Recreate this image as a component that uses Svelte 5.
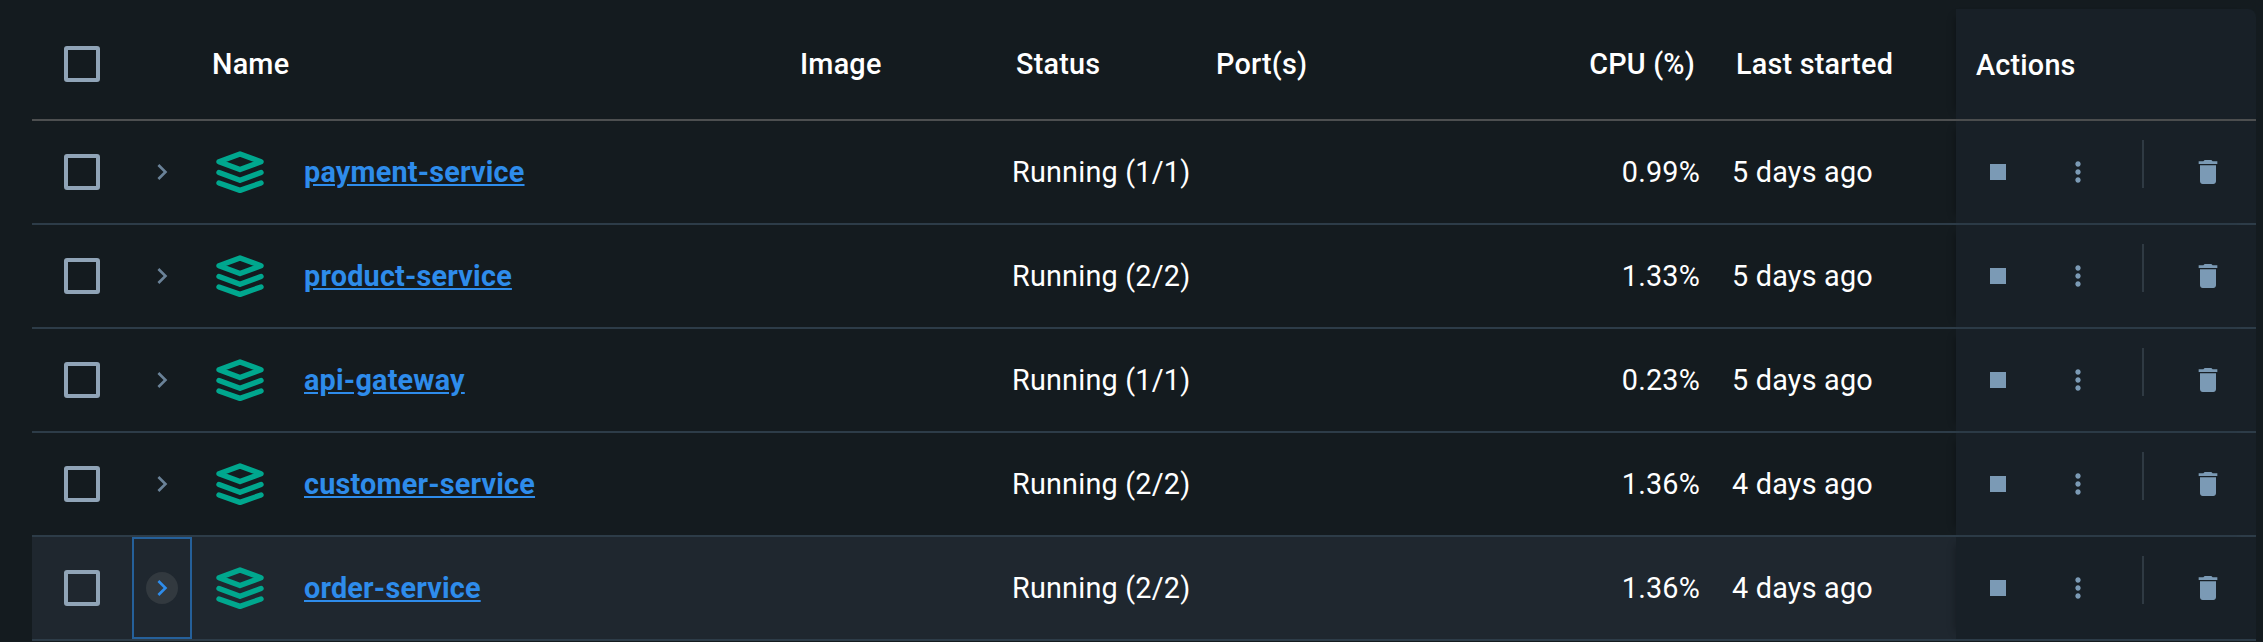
<script>
  const services = [
    { name: "payment-service", status: "Running (1/1)", cpu: "0.99%", started: "5 days ago" },
    { name: "product-service", status: "Running (2/2)", cpu: "1.33%", started: "5 days ago" },
    { name: "api-gateway", status: "Running (1/1)", cpu: "0.23%", started: "5 days ago" },
    { name: "customer-service", status: "Running (2/2)", cpu: "1.36%", started: "4 days ago" },
    { name: "order-service", status: "Running (2/2)", cpu: "1.36%", started: "4 days ago", active: true },
  ];
</script>

<div class="table">
  <div class="row head">
    <div class="select"><span class="checkbox"></span></div>
    <div class="expand"></div>
    <div class="name">Name</div>
    <div class="image">Image</div>
    <div class="status">Status</div>
    <div class="ports">Port(s)</div>
    <div class="cpu">CPU (%)</div>
    <div class="started">Last started</div>
    <div class="actions"><span class="actions-title">Actions</span></div>
  </div>

  {#each services as service}
    <div class="row" class:active={service.active}>
      <div class="select"><span class="checkbox"></span></div>
      <div class="expand">
        <span class="chevron">
          <svg viewBox="0 0 24 24" width="32" height="32"><path d="M10 6 8.59 7.41 13.17 12l-4.58 4.59L10 18l6-6z" /></svg>
        </span>
      </div>
      <div class="name">
        <svg class="stack" viewBox="0 0 48 42" width="48" height="42">
          <path d="M24 3 45 10.75 24 18.5 3 10.75Z" fill="none" stroke-width="5.4" stroke-linejoin="round" />
          <path d="M3 21.5 24 29.3 45 21.5" fill="none" stroke-width="5.4" stroke-linecap="round" stroke-linejoin="round" />
          <path d="M3 32 24 39.4 45 32" fill="none" stroke-width="5.4" stroke-linecap="round" stroke-linejoin="round" />
        </svg>
        <a href="#top">{service.name}</a>
      </div>
      <div class="image"></div>
      <div class="status">{service.status}</div>
      <div class="ports"></div>
      <div class="cpu">{service.cpu}</div>
      <div class="started">{service.started}</div>
      <div class="actions">
        <svg viewBox="0 0 24 24" width="32" height="32"><path d="M6 6h12v12H6z" /></svg>
        <svg viewBox="0 0 24 24" width="32" height="32"><path d="M12 8c1.1 0 2-.9 2-2s-.9-2-2-2-2 .9-2 2 .9 2 2 2zm0 2c-1.1 0-2 .9-2 2s.9 2 2 2 2-.9 2-2-.9-2-2-2zm0 6c-1.1 0-2 .9-2 2s.9 2 2 2 2-.9 2-2-.9-2-2-2z" /></svg>
        <span class="divider"></span>
        <svg viewBox="0 0 24 24" width="32" height="32"><path d="M6 19c0 1.1.9 2 2 2h8c1.1 0 2-.9 2-2V7H6v12zM19 4h-3.5l-1-1h-5l-1 1H5v2h14V4z" /></svg>
      </div>
    </div>
  {/each}
</div>

<style>
  :global(body) {
    background: #141b1f;
  }

  .table {
    margin: 9px 7px 0 32px;
    font-family: Roboto, sans-serif;
    font-size: 28.8px;
    letter-spacing: 0.2px;
    color: #fff;
  }

  .row {
    display: grid;
    grid-template-columns: 100px 60px 592px 212px 204px 316px 184px 256px 300px;
    height: 104px;
    box-sizing: border-box;
    border-bottom: 2px solid #2d3c48;
  }

  .row > div {
    display: flex;
    align-items: center;
    white-space: nowrap;
  }

  .row.head {
    height: 112px;
    border-bottom-color: #4d4f50;
    font-weight: 500;
  }

  .row.active {
    background: #1f272f;
  }

  .select {
    padding-left: 32px;
  }

  .checkbox {
    width: 36px;
    height: 36px;
    box-sizing: border-box;
    border: 4px solid #90a4b7;
    border-radius: 3px;
  }

  .expand {
    justify-content: center;
  }

  .active .expand {
    outline: 2px solid #25609a;
    outline-offset: -2px;
  }

  .chevron {
    width: 32px;
    height: 32px;
    border-radius: 50%;
    fill: #6a8298;
  }

  .active .chevron {
    background: #32393f;
    fill: #2e8ceb;
  }

  .chevron svg {
    display: block;
  }

  .name {
    padding-left: 24px;
    gap: 40px;
  }

  .head .name {
    padding-left: 20px;
  }

  .stack {
    stroke: #00a78e;
    flex: none;
  }

  .name a {
    color: #2e8ceb;
    font-weight: 700;
  }

  .image {
    padding-left: 16px;
  }

  .status {
    padding-left: 16px;
  }

  .head .status {
    padding-left: 20px;
  }

  .ports {
    padding-left: 16px;
  }

  .cpu {
    justify-content: flex-end;
  }

  .head .cpu {
    padding-right: 5px;
  }

  .started {
    padding-left: 32px;
  }

  .head .started {
    padding-left: 36px;
  }

  .actions {
    background: #182027;
    padding-left: 26px;
    gap: 48px;
    fill: #7b9ab5;
    box-shadow: -8px 0 8px -8px rgba(0, 0, 0, 0.35);
  }

  .head .actions {
    padding-left: 20px;
    padding-top: 2px;
    box-sizing: border-box;
    border-top-right-radius: 8px;
  }

  .actions svg {
    flex: none;
  }

  .divider {
    width: 2px;
    height: 48px;
    margin-bottom: 16px;
    background: #2f3a43;
  }
</style>
